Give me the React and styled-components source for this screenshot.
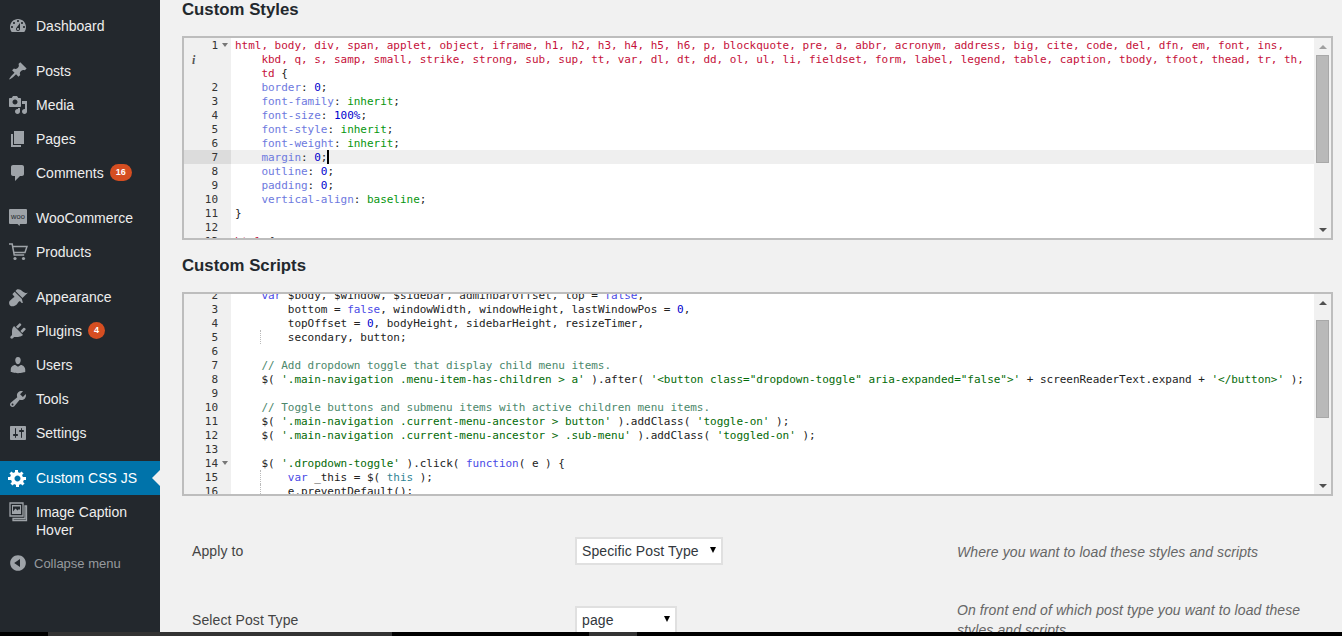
import React from "react";
import styled, { createGlobalStyle } from "styled-components";

const GlobalStyle = createGlobalStyle`
  html, body {
    margin: 0;
    height: 100%;
    overflow: hidden;
    background: #f1f1f1;
    font-family: "Liberation Sans", Arial, sans-serif;
    font-size: 14px;
    color: #444;
  }
`;

const paths = {
  dashboard:
    "M3.76 16h12.48c1.1-1.37 1.76-3.11 1.76-5 0-4.42-3.58-8-8-8s-8 3.58-8 8c0 1.89.66 3.63 1.76 5zM10 4c.55 0 1 .45 1 1s-.45 1-1 1-1-.45-1-1 .45-1 1-1zM6 6c.55 0 1 .45 1 1s-.45 1-1 1-1-.45-1-1 .45-1 1-1zm8 0c.55 0 1 .45 1 1s-.45 1-1 1-1-.45-1-1 .45-1 1-1zm-5.37 5.55L12 7v6c0 1.1-.9 2-2 2s-2-.9-2-2c0-.57.24-1.08.63-1.45zM4 10c.55 0 1 .45 1 1s-.45 1-1 1-1-.45-1-1 .45-1 1-1zm12 0c.55 0 1 .45 1 1s-.45 1-1 1-1-.45-1-1 .45-1 1-1zm-5 3c0-.55-.45-1-1-1s-1 .45-1 1 .45 1 1 1 1-.45 1-1z",
  post: "M10.44 3.02l1.82-1.82 6.36 6.35-1.83 1.82c-1.05-.68-2.48-.57-3.41.36l-.75.75c-.92.93-1.04 2.35-.35 3.41l-1.83 1.82-2.41-2.41-2.8 2.79c-.42.42-3.38 2.71-3.8 2.29s1.86-3.39 2.28-3.81l2.79-2.79L4.1 9.36l1.83-1.82c1.05.69 2.48.57 3.4-.36l.75-.75c.93-.92 1.05-2.35.36-3.41z",
  media:
    "M13 11V4c0-.55-.45-1-1-1h-1.67L9 1H5L3.67 3H2c-.55 0-1 .45-1 1v7c0 .55.45 1 1 1h10c.55 0 1-.45 1-1zM7 4.5c1.38 0 2.5 1.12 2.5 2.5S8.38 9.5 7 9.5 4.5 8.38 4.5 7 5.62 4.5 7 4.5zM14 6h5v10.5c0 1.38-1.12 2.5-2.5 2.5S14 17.88 14 16.5s1.12-2.5 2.5-2.5c.17 0 .34.02.5.05V9h-3V6zm-4 8.05V13h2v3.5c0 1.38-1.12 2.5-2.5 2.5S7 17.88 7 16.5 8.12 14 9.5 14c.17 0 .34.02.5.05z",
  page: "M6 15V2h10v13H6zm-1 1h8v2H3V5h2v11z",
  comments:
    "M5 2h9c1.1 0 2 .9 2 2v7c0 1.1-.9 2-2 2h-2l-5 5v-5H5c-1.1 0-2-.9-2-2V4c0-1.1.9-2 2-2z",
  appearance:
    "M14.48 11.06L7.41 3.99l1.5-1.5c.5-.56 2.3-.47 3.51.32 1.21.8 1.43 1.28 2.91 2.1 1.18.64 2.45 1.26 4.45.85zm-.71.71L6.7 4.7 4.93 6.47c-.39.39-.39 1.02 0 1.41l1.06 1.06c.39.39.39 1.03 0 1.42-.6.6-1.43 1.11-2.21 1.69-.35.26-.7.53-1.01.84C1.43 13.23.18 16.59 2 18.4c1.82 1.82 5.1.76 6.44-.58.32-.31.59-.66.84-1.01.58-.78 1.09-1.61 1.69-2.21.39-.39 1.02-.39 1.41 0l1.06 1.06c.39.39 1.02.39 1.41 0z",
  plugins:
    "M13.11 4.36L9.87 7.6 8 5.73l3.24-3.24c.35-.34 1.05-.2 1.56.32.52.51.66 1.21.31 1.55zm-8 1.77l.91-1.12 9.01 9.01-1.19.84c-.71.71-2.63 1.16-3.82 1.16H6.14L4.9 17.26c-.59.59-1.54.59-2.12 0-.59-.58-.59-1.53 0-2.12l1.24-1.24v-3.88c0-1.13.4-3.19 1.09-3.89zm7.26 3.97l3.24-3.24c.34-.35 1.04-.2 1.55.31.52.52.66 1.22.32 1.57l-3.24 3.24z",
  users:
    "M10 9.25c-2.27 0-2.73-3.44-2.73-3.44C7 4.02 7.82 2 9.97 2c2.16 0 2.98 2.02 2.71 3.81 0 0-.41 3.44-2.68 3.44zm0 2.57L12.72 10c2.39 0 4.52 2.33 4.52 4.53v2.49s-3.65 1.13-7.24 1.13c-3.65 0-7.24-1.13-7.24-1.13v-2.49c0-2.25 1.94-4.48 4.47-4.48z",
  tools:
    "M16.68 9.77c-1.34 1.34-3.3 1.67-4.95.99l-5.41 6.52c-.99.99-2.59.99-3.58 0s-.99-2.59 0-3.57l6.52-5.42c-.68-1.65-.35-3.61.99-4.95 1.28-1.28 3.12-1.62 4.72-1.06l-2.89 2.89 2.82 2.82 2.86-2.87c.53 1.58.18 3.39-1.08 4.65zM3.81 16.21c.4.39 1.04.39 1.43 0 .4-.4.4-1.04 0-1.43-.39-.4-1.03-.4-1.43 0-.39.39-.39 1.03 0 1.43z",
  settings:
    "M18 16V4c0-.55-.45-1-1-1H3c-.55 0-1 .45-1 1v12c0 .55.45 1 1 1h14c.55 0 1-.45 1-1zM8 11h1c.55 0 1 .45 1 1s-.45 1-1 1H8v1.5c0 .28-.22.5-.5.5s-.5-.22-.5-.5V13H6c-.55 0-1-.45-1-1s.45-1 1-1h1V5.5c0-.28.22-.5.5-.5s.5.22.5.5V11zm5-2h-1c-.55 0-1-.45-1-1s.45-1 1-1h1V5.5c0-.28.22-.5.5-.5s.5.22.5.5V7h1c.55 0 1 .45 1 1s-.45 1-1 1h-1v5.5c0 .28-.22.5-.5.5s-.5-.22-.5-.5V9z",
  gear: "M18 12h-2.18c-.17.7-.44 1.35-.81 1.93l1.54 1.54-2.1 2.1-1.54-1.54c-.58.36-1.23.63-1.91.81V19H8v-2.18c-.68-.17-1.33-.44-1.91-.81l-1.54 1.54-2.12-2.12 1.54-1.54c-.36-.58-.63-1.23-.8-1.89H0V9h2.17c.17-.7.44-1.35.8-1.93L1.43 5.53l2.12-2.12 1.54 1.54c.58-.36 1.23-.63 1.91-.81V2h3v2.14c.68.17 1.33.44 1.91.81l1.54-1.54 2.12 2.12-1.54 1.54c.36.58.63 1.23.8 1.93H18v3zm-8.5 1.5c1.66 0 3-1.34 3-3s-1.34-3-3-3-3 1.34-3 3 1.34 3 3 3z",
  collapse:
    "M10 2.16c4.33 0 7.84 3.51 7.84 7.84s-3.51 7.84-7.84 7.84S2.16 14.33 2.16 10 5.71 2.16 10 2.16zm2 11.72V6.12L6.18 9.97z",
};

const Icon = ({ name }) => (
  <IconSvg viewBox="0 0 20 20">
    <path d={paths[name]} />
  </IconSvg>
);

const WooIcon = () => (
  <IconSvg viewBox="0 0 20 20">
    <path d="M2 1h16a1 1 0 0 1 1 1v13a1 1 0 0 1-1 1h-6l-.5 2-2-2H2a1 1 0 0 1-1-1V2a1 1 0 0 1 1-1z" />
    <WooText x="10" y="11">
      woo
    </WooText>
  </IconSvg>
);

const CartIcon = () => (
  <IconSvg viewBox="0 0 20 20">
    <path
      d="M1 2h3.2l2 11h10M5 4.5h14l-2 6H6"
      fill="none"
      stroke="currentColor"
      strokeWidth="1.5"
    />
    <circle cx="7" cy="16.5" r="1.6" />
    <circle cx="15.5" cy="16.5" r="1.6" />
  </IconSvg>
);

const CaptionIcon = () => (
  <IconSvg viewBox="0 0 20 20">
    <path
      d="M2 1h13v13H2zM17 4h1.5v14.500H5V16.500h12z"
      fill="none"
      stroke="currentColor"
      strokeWidth="1.300"
    />
    <path d="M4 3h9v9H4zM5 9.500l2.500-3 2 2 1.500-1.500 1 1V4.500H5z" />
  </IconSvg>
);

const menu = [
  { label: "Dashboard", icon: <Icon name="dashboard" /> },
  { label: "Posts", icon: <Icon name="post" />, gap: true },
  { label: "Media", icon: <Icon name="media" /> },
  { label: "Pages", icon: <Icon name="page" /> },
  { label: "Comments", icon: <Icon name="comments" />, count: 16 },
  { label: "WooCommerce", icon: <WooIcon />, gap: true },
  { label: "Products", icon: <CartIcon /> },
  { label: "Appearance", icon: <Icon name="appearance" />, gap: true },
  { label: "Plugins", icon: <Icon name="plugins" />, count: 4 },
  { label: "Users", icon: <Icon name="users" /> },
  { label: "Tools", icon: <Icon name="tools" /> },
  { label: "Settings", icon: <Icon name="settings" /> },
  { label: "Custom CSS JS", icon: <Icon name="gear" />, gap: true, active: true },
  { label: "Image Caption Hover", icon: <CaptionIcon /> },
];

const t = (text) => ["tag", text];
const p = (text) => ["prop", text];
const v = (text) => ["val", text];
const n = (text) => ["num", text];
const s = (text) => ["str", text];
const k = (text) => ["key", text];
const c = (text) => ["com", text];
const x = (text) => ["plain", text];

const cssRule = (name, value, kind = v) => [x("    "), p(name), x(": "), kind(value), x(";")];

const styleLines = [
  {
    num: 1,
    fold: true,
    code: [
      t(
        "html, body, div, span, applet, object, iframe, h1, h2, h3, h4, h5, h6, p, blockquote, pre, a, abbr, acronym, address, big, cite, code, del, dfn, em, font, ins,"
      ),
    ],
  },
  {
    note: true,
    code: [
      x("    "),
      t(
        "kbd, q, s, samp, small, strike, strong, sub, sup, tt, var, dl, dt, dd, ol, ul, li, fieldset, form, label, legend, table, caption, tbody, tfoot, thead, tr, th,"
      ),
    ],
  },
  { code: [x("    "), t("td"), x(" {")] },
  { num: 2, code: cssRule("border", "0", n) },
  { num: 3, code: cssRule("font-family", "inherit") },
  { num: 4, code: cssRule("font-size", "100%", n) },
  { num: 5, code: cssRule("font-style", "inherit") },
  { num: 6, code: cssRule("font-weight", "inherit") },
  { num: 7, code: cssRule("margin", "0", n), active: true, cursor: true },
  { num: 8, code: cssRule("outline", "0", n) },
  { num: 9, code: cssRule("padding", "0", n) },
  { num: 10, code: cssRule("vertical-align", "baseline") },
  { num: 11, code: [x("}")] },
  { num: 12, code: [] },
  { num: 13, code: [t("html"), x(" {")] },
];

const scriptLines = [
  {
    num: 2,
    code: [x("    "), k("var"), x(" $body, $window, $sidebar, adminbarOffset, top = "), k("false"), x(",")],
  },
  {
    num: 3,
    code: [
      x("        bottom = "),
      k("false"),
      x(", windowWidth, windowHeight, lastWindowPos = "),
      n("0"),
      x(","),
    ],
  },
  {
    num: 4,
    code: [x("        topOffset = "), n("0"), x(", bodyHeight, sidebarHeight, resizeTimer,")],
  },
  { num: 5, guide: true, code: [x("        secondary, button;")] },
  { num: 6, code: [] },
  { num: 7, code: [x("    "), c("// Add dropdown toggle that display child menu items.")] },
  {
    num: 8,
    code: [
      x("    $( "),
      s("'.main-navigation .menu-item-has-children > a'"),
      x(" ).after( "),
      s("'<button class=\"dropdown-toggle\" aria-expanded=\"false\">'"),
      x(" + screenReaderText.expand + "),
      s("'</button>'"),
      x(" );"),
    ],
  },
  { num: 9, code: [] },
  {
    num: 10,
    code: [x("    "), c("// Toggle buttons and submenu items with active children menu items.")],
  },
  {
    num: 11,
    code: [
      x("    $( "),
      s("'.main-navigation .current-menu-ancestor > button'"),
      x(" ).addClass( "),
      s("'toggle-on'"),
      x(" );"),
    ],
  },
  {
    num: 12,
    code: [
      x("    $( "),
      s("'.main-navigation .current-menu-ancestor > .sub-menu'"),
      x(" ).addClass( "),
      s("'toggled-on'"),
      x(" );"),
    ],
  },
  { num: 13, code: [] },
  {
    num: 14,
    fold: true,
    code: [
      x("    $( "),
      s("'.dropdown-toggle'"),
      x(" ).click( "),
      k("function"),
      x("( e ) {"),
    ],
  },
  {
    num: 15,
    guide: true,
    code: [x("        "), k("var"), x(" _this = $( "), ["lang", "this"], x(" );")],
  },
  { num: 16, guide: true, code: [x("        e.preventDefault();")] },
];

const CodeEditor = ({ lines, scrollTop, thumbOffset, thumbSize }) => (
  <Editor>
    <Viewport>
      <Lines $top={scrollTop}>
        {lines.map((line, i) => (
          <Row key={i} $active={line.active}>
            <Gutter $active={line.active}>
              {line.note && <Note>i</Note>}
              {line.num}
              {line.fold && <Fold />}
            </Gutter>
            <Code $guide={line.guide}>
              {line.code.map(([type, text], j) => (
                <Token key={j} $type={type}>
                  {text}
                </Token>
              ))}
              {line.cursor && <Cursor />}
            </Code>
          </Row>
        ))}
      </Lines>
    </Viewport>
    <Scrollbar>
      <ArrowButton>
        <ArrowUp $dim={thumbOffset === 0} />
      </ArrowButton>
      <Thumb $offset={thumbOffset} $size={thumbSize} />
      <ArrowButton>
        <ArrowDown />
      </ArrowButton>
    </Scrollbar>
  </Editor>
);

const App = () => {
  return (
    <>
      <GlobalStyle />
      <Screen>
        <Body>
          <Sidebar>
            {menu.map((item) => (
              <MenuItem key={item.label} $gap={item.gap} $active={item.active}>
                <IconSlot>{item.icon}</IconSlot>
                <MenuLabel>
                  {item.label}
                  {item.count && <Badge>{item.count}</Badge>}
                </MenuLabel>
              </MenuItem>
            ))}
            <Collapse>
              <IconSlot>
                <Icon name="collapse" />
              </IconSlot>
              <span>Collapse menu</span>
            </Collapse>
          </Sidebar>

          <Main>
            <Heading>Custom Styles</Heading>
            <CodeEditor lines={styleLines} scrollTop={0} thumbOffset={0} thumbSize={108} />

            <Heading $spaced>Custom Scripts</Heading>
            <CodeEditor lines={scriptLines} scrollTop={-6} thumbOffset={9} thumbSize={98} />

            <Form>
              <FieldLabel>Apply to</FieldLabel>
              <SelectWrap $width={148}>
                <Select defaultValue="specific">
                  <option value="specific">Specific Post Type</option>
                </Select>
                <SelectArrow />
              </SelectWrap>
              <FieldHint>Where you want to load these styles and scripts</FieldHint>

              <FieldLabel>Select Post Type</FieldLabel>
              <SelectWrap $width={102}>
                <Select defaultValue="page">
                  <option value="page">page</option>
                </Select>
                <SelectArrow />
              </SelectWrap>
              <FieldHint>On front end of which post type you want to load these styles and scripts</FieldHint>
            </Form>
          </Main>
        </Body>

        <TaskStrip>
          <StripPart $width={48} />
          <StripPart $width={344} $light />
          <StripPart $width={197} />
          <StripPart $width={48} $light />
        </TaskStrip>
      </Screen>
    </>
  );
};

const tokenColors = {
  tag: "#c5103a",
  prop: "#6d79de",
  val: "#06960e",
  num: "#0000cd",
  str: "#036a07",
  key: "#4a4ae6",
  lang: "#318495",
  com: "#4c886b",
  plain: "#222",
};

const Screen = styled.div`
  width: 1342px;
  height: 636px;
  display: flex;
  flex-direction: column;
  overflow: hidden;
`;

const Body = styled.div`
  flex: 1;
  min-height: 0;
  display: flex;
  overflow: hidden;
`;

const Sidebar = styled.nav`
  width: 160px;
  flex-shrink: 0;
  padding-top: 9px;
  background: #23282d;
  box-sizing: border-box;
`;

const MenuItem = styled.div`
  position: relative;
  display: flex;
  margin-top: ${(props) => (props.$gap ? "11px" : "0")};
  padding: 8px 0;
  line-height: 18px;
  color: ${(props) => (props.$active ? "#fff" : "#eee")};
  background: ${(props) => (props.$active ? "#0073aa" : "transparent")};

  svg {
    color: ${(props) => (props.$active ? "#fff" : "#9ea3a8")};
  }

  ${(props) =>
    props.$active &&
    `&::after {
      content: "";
      position: absolute;
      right: 0;
      top: 9px;
      border: 8px solid transparent;
      border-left-width: 0;
      border-right-color: #f1f1f1;
    }`}
`;

const IconSlot = styled.span`
  width: 36px;
  height: 18px;
  flex-shrink: 0;
  display: flex;
  justify-content: center;
`;

const IconSvg = styled.svg`
  width: 20px;
  height: 20px;
  flex-shrink: 0;
  margin: -1px 0;
  fill: currentColor;
`;

const WooText = styled.text`
  font-family: "Liberation Sans", Arial, sans-serif;
  font-size: 7.500px;
  fill: #23282d;
  text-anchor: middle;
`;

const MenuLabel = styled.span`
  flex: 1;
  padding-right: 10px;
`;

const Badge = styled.span`
  display: inline-block;
  min-width: 5px;
  height: 17px;
  margin-left: 6px;
  padding: 0 6px;
  border-radius: 9px;
  background: #d54e21;
  color: #fff;
  font-size: 9px;
  font-weight: 700;
  line-height: 17px;
  text-align: center;
  vertical-align: top;
`;

const Collapse = styled.div`
  display: flex;
  align-items: center;
  height: 34px;
  margin-top: -1px;
  font-size: 13px;
  color: #969a9e;

  ${IconSlot} {
    width: 34px;
    padding-left: 2px;
    box-sizing: border-box;
  }

  svg {
    color: #9ea3a8;
  }
`;

const Main = styled.main`
  flex: 1;
  min-width: 0;
  padding: 0 9px 0 22px;
  overflow: hidden;
`;

const Heading = styled.h2`
  margin: ${(props) => (props.$spaced ? "16px" : "0")} 0 16px;
  font-size: 16.800px;
  font-weight: 700;
  line-height: 20px;
  color: #23282d;
`;

const Editor = styled.div`
  display: flex;
  height: 204px;
  box-sizing: border-box;
  border: 2px solid #bdbdbd;
  background: #fff;
`;

const Viewport = styled.div`
  flex: 1;
  min-width: 0;
  overflow: hidden;
`;

const Lines = styled.div`
  margin-top: ${(props) => props.$top}px;
`;

const Row = styled.div`
  display: flex;
  height: 14px;
  background: ${(props) => (props.$active ? "#efefef" : "transparent")};
  font-family: "DejaVu Sans Mono", "Liberation Mono", monospace;
  font-size: 11px;
  letter-spacing: -0.025px;
  line-height: 16px;
`;

const Gutter = styled.div`
  position: relative;
  width: 47px;
  flex-shrink: 0;
  box-sizing: border-box;
  padding-right: 13px;
  text-align: right;
  color: #333;
  background: ${(props) => (props.$active ? "#dcdcdc" : "#f0f0f0")};
`;

const Note = styled.span`
  position: absolute;
  left: 8px;
  top: 0;
  font-family: "Liberation Serif", serif;
  font-style: italic;
  font-weight: 700;
  font-size: 12px;
  color: #555;
`;

const Fold = styled.span`
  position: absolute;
  right: 3px;
  top: 5px;
  border: 3px solid transparent;
  border-top: 4px solid #777;
  border-bottom-width: 0;
`;

const Code = styled.div`
  position: relative;
  flex: 1;
  min-width: 0;
  padding-left: 4px;
  white-space: pre;

  ${(props) =>
    props.$guide &&
    `&::before {
      content: "";
      position: absolute;
      left: 29px;
      top: 0;
      bottom: 0;
      border-left: 1px dotted #bbb;
    }`}
`;

const Token = styled.span`
  color: ${(props) => tokenColors[props.$type]};
`;

const Cursor = styled.span`
  display: inline-block;
  width: 2px;
  height: 14px;
  margin-right: -2px;
  vertical-align: top;
  background: #000;
`;

const Scrollbar = styled.div`
  width: 17px;
  flex-shrink: 0;
  display: flex;
  flex-direction: column;
  background: #f1f1f1;
`;

const ArrowButton = styled.div`
  height: 17px;
  flex-shrink: 0;
  display: flex;
  align-items: center;
  justify-content: center;

  &:last-child {
    margin-top: auto;
  }
`;

const ArrowUp = styled.span`
  border: 4px solid transparent;
  border-top-width: 0;
  border-bottom: 4px solid ${(props) => (props.$dim ? "#a0a0a0" : "#505050")};
`;

const ArrowDown = styled.span`
  border: 4px solid transparent;
  border-bottom-width: 0;
  border-top: 4px solid #505050;
`;

const Thumb = styled.div`
  height: ${(props) => props.$size}px;
  margin: ${(props) => props.$offset}px 2px 0;
  box-sizing: border-box;
  border: 1px solid #a8a8a8;
  background: #b9b9b9;
`;

const Form = styled.div`
  display: grid;
  grid-template-columns: 383px 382px 370px;
  row-gap: 34px;
  align-items: center;
  padding: 41px 0 0 10px;
  letter-spacing: 0.1px;
`;

const FieldLabel = styled.div`
  color: #444;
`;

const SelectWrap = styled.div`
  position: relative;
  width: ${(props) => props.$width}px;
  height: 28px;
`;

const Select = styled.select`
  width: 100%;
  height: 100%;
  box-sizing: border-box;
  margin: 0;
  padding: 0 0 0 5px;
  appearance: none;
  border: 2px solid #e0e0e0;
  border-radius: 0;
  background: #fff;
  color: #32373c;
  font-family: "Liberation Sans", Arial, sans-serif;
  font-size: 14px;
  letter-spacing: 0.1px;
`;

const SelectArrow = styled.span`
  position: absolute;
  right: 7px;
  top: 10px;
  border: 3px solid transparent;
  border-top: 6px solid #000;
  border-bottom-width: 0;
`;

const FieldHint = styled.div`
  padding-top: 1px;
  font-style: italic;
  line-height: 20px;
  color: #666;
`;

const TaskStrip = styled.div`
  height: 4px;
  flex-shrink: 0;
  display: flex;
  background: #000;
`;

const StripPart = styled.div`
  width: ${(props) => props.$width}px;
  background: ${(props) => (props.$light ? "#333" : "#000")};
`;

export default App;
